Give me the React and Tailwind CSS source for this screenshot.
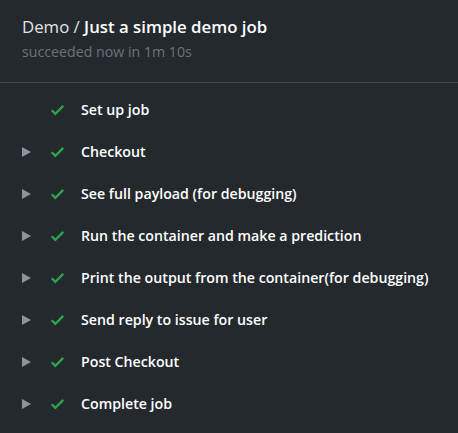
import React from "react";

const steps = [
  { name: "Set up job", expandable: false },
  { name: "Checkout", expandable: true },
  { name: "See full payload (for debugging)", expandable: true },
  { name: "Run the container and make a prediction", expandable: true },
  { name: "Print the output from the container(for debugging)", expandable: true },
  { name: "Send reply to issue for user", expandable: true },
  { name: "Post Checkout", expandable: true },
  { name: "Complete job", expandable: true },
];

function Check() {
  return (
    <svg width="15" height="12" viewBox="0 2.5 12 11" fill="#2ea44f">
      <path d="M12 5l-8 8-4-4 1.5-1.5L4 10l6.5-6.5L12 5z" />
    </svg>
  );
}

function Tri() {
  return (
    <svg width="9" height="10" viewBox="0 0 9 10" fill="#8b949e">
      <path d="M0 0 L9 5 L0 10 Z" />
    </svg>
  );
}

export default function App() {
  return (
    <div
      className="w-[458px] h-[433px] bg-[#24292e] overflow-hidden"
      style={{ fontFamily: '"Open Sans", "Noto Sans", sans-serif' }}
    >
      <div className="h-[83px] border-b border-[#444d56] px-[22px] pt-[15px]">
        <div className="text-[16.8px] leading-[24px] text-[#e1e4e8]">
          Demo / <span className="font-semibold text-white">Just a simple demo job</span>
        </div>
        <div className="text-[14.2px] leading-[20px] text-[#6a737d] mt-[3px]">
          succeeded now in 1m 10s
        </div>
      </div>
      <div className="pt-[6px]">
        {steps.map((s) => (
          <div key={s.name} className="flex items-center h-[42px]">
            <div className="w-[50px] pl-[22px] flex items-center">
              {s.expandable && <Tri />}
            </div>
            <div className="w-[31px] flex items-center">
              <Check />
            </div>
            <div className="text-[14.2px] font-semibold text-white whitespace-nowrap">{s.name}</div>
          </div>
        ))}
      </div>
    </div>
  );
}
